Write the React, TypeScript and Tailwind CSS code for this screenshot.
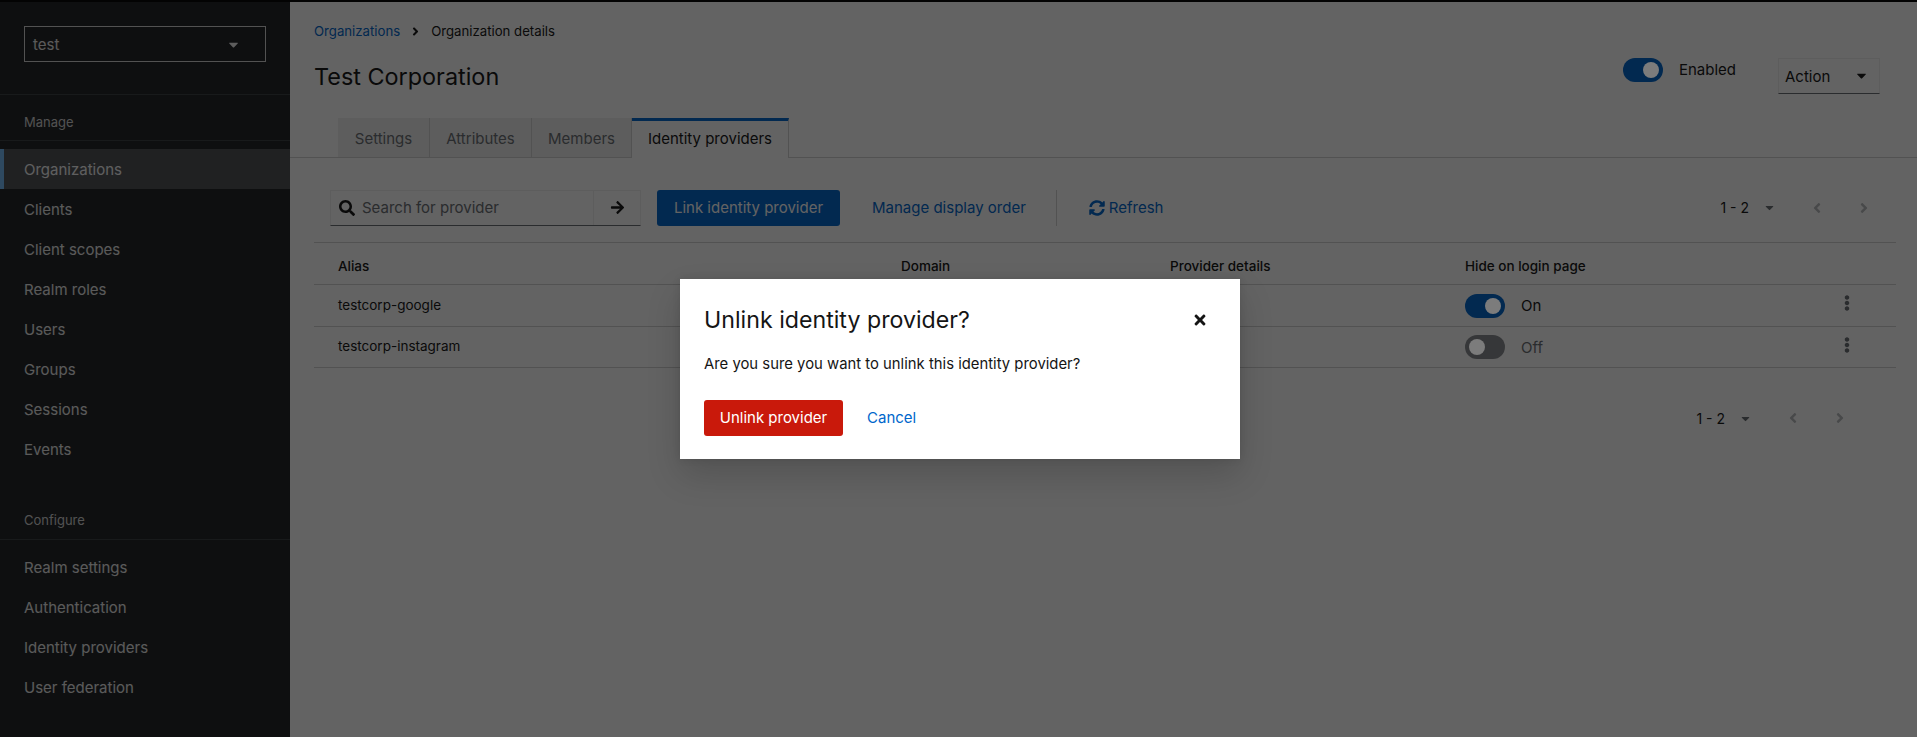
import React from "react";
import {
  FaAngleLeft,
  FaAngleRight,
  FaArrowRight,
  FaCaretDown,
  FaEllipsisV,
  FaSearch,
  FaSyncAlt,
  FaTimes,
} from "react-icons/fa";

const manageItems = ["Organizations", "Clients", "Client scopes", "Realm roles", "Users", "Groups", "Sessions", "Events"];
const configureItems = ["Realm settings", "Authentication", "Identity providers", "User federation"];

const NavItem = ({ label, active }: { label: string; active?: boolean }) => (
  <div
    className={
      active
        ? "flex h-10 items-center border-l-4 border-[#73bcf7] bg-[#4f5255] pt-[2px] pl-5 text-[#f5f5f5]"
        : "flex h-10 items-center pt-[2px] pl-6 text-[#e8e8e8]"
    }
  >
    {label}
  </div>
);

const Sidebar = () => (
  <aside className="flex w-[290px] shrink-0 flex-col bg-[#212427] text-[15px]">
    <div className="border-b border-[#3c3f42] px-6 pt-6 pb-8">
      <div className="flex h-9 items-center justify-between border border-[#d2d2d2] pr-6 pl-2 text-[#e8e8e8]">
        <span className="pt-[2px]">test</span>
        <FaCaretDown className="text-[15px] text-[#f0f0f0]" />
      </div>
    </div>
    <div className="flex h-[46px] items-center border-b border-[#3c3f42] pt-[10px] pl-6 text-[13px] text-[#d2d2d2]">Manage</div>
    <nav className="mt-2">
      {manageItems.map((item) => (
        <NavItem key={item} label={item} active={item === "Organizations"} />
      ))}
    </nav>
    <div className="mt-[31px] flex h-[40px] items-center border-b border-[#3c3f42] pt-[2px] pl-6 text-[13px] text-[#d2d2d2]">Configure</div>
    <nav className="mt-[7px]">
      {configureItems.map((item) => (
        <NavItem key={item} label={item} />
      ))}
    </nav>
  </aside>
);

const Pagination = () => (
  <div className="flex items-center text-[14px] text-[#151515]">
    <span>1 - 2</span>
    <FaCaretDown className="ml-[14px] text-[13px] text-[#6a6e73]" />
    <FaAngleLeft className="ml-[33px] text-[16px] text-[#b8bbbe]" />
    <FaAngleRight className="ml-[31px] text-[16px] text-[#b8bbbe]" />
  </div>
);

const Toggle = ({ on }: { on: boolean }) => (
  <div className={on ? "flex h-6 w-10 items-center justify-end rounded-full bg-[#06c] pr-1" : "flex h-6 w-10 items-center rounded-full bg-[#8a8d90] pl-1"}>
    <div className="relative z-20 h-4 w-4 rounded-full bg-[#7c7c7c]" />
  </div>
);

const tabs = [
  { label: "Settings", width: "w-[92px]" },
  { label: "Attributes", width: "w-[102px]" },
  { label: "Members", width: "w-[100px]" },
];

const Row = ({ alias, on }: { alias: string; on: boolean }) => (
  <div className={on ? "grid h-[42px] grid-cols-[587px_269px_295px_1fr] border-b border-[#d2d2d2] text-[13.5px]" : "grid h-[41px] grid-cols-[587px_269px_295px_1fr] border-b border-[#d2d2d2] text-[13.5px]"}>
    <div className={on ? "pt-[10px] pl-6 text-[#151515]" : "pt-[9px] pl-6 text-[#151515]"}>{alias}</div>
    <div />
    <div />
    <div className="flex justify-between pr-[41px]">
      <div className="flex items-center pt-[1px]">
        <Toggle on={on} />
        <span className={on ? "ml-4 pt-[1px] text-[15px] text-[#151515]" : "ml-4 pt-[1px] text-[15px] text-[#6a6e73]"}>{on ? "On" : "Off"}</span>
      </div>
      <FaEllipsisV className="mt-[10px] text-[16px] text-[#6a6e73]" />
    </div>
  </div>
);

const Main = () => (
  <main className="flex min-w-0 flex-1 flex-col bg-white text-[#151515]">
    <div className="flex items-center px-6 pt-[20px] text-[13.2px]">
      <span className="text-[#06c]">Organizations</span>
      <FaAngleRight className="mx-[9px] text-[13px]" />
      <span>Organization details</span>
    </div>
    <div className="flex justify-between pt-[16px] pr-[37px] pl-6">
      <h1 className="pt-[1px] text-[23.4px] leading-9">Test Corporation</h1>
      <div className="flex items-start">
        <div className="flex h-6 items-center">
          <Toggle on />
          <span className="ml-4 text-[15px]">Enabled</span>
        </div>
        <div className="ml-[42px] flex h-9 w-[102px] items-center justify-between border border-[#f0f0f0] border-b-[#6a6e73] pr-[10px] pl-[6px] text-[15px]">
          <span className="pt-[2px]">Action</span>
          <FaCaretDown className="text-[15px]" />
        </div>
      </div>
    </div>
    <div className="mt-[23px] flex h-10 border-b border-[#d2d2d2] pl-12 text-[15px]">
      {tabs.map((tab) => (
        <div key={tab.label} className={`flex items-center justify-center border-r border-[#d2d2d2] bg-[#f0f0f0] pt-[3px] text-[#6a6e73] ${tab.width}`}>
          {tab.label}
        </div>
      ))}
      <div className="-mb-px flex w-[157px] items-center justify-center border-r border-t-[3px] border-[#d2d2d2] border-t-[#06c] bg-white">Identity providers</div>
    </div>
    <div className="flex items-center justify-between pt-8 pr-[45px] pb-4 pl-10">
      <div className="flex items-center text-[15px]">
        <div className="flex h-9 w-[311px] items-center border border-[#f0f0f0] border-b-[#6a6e73]">
          <div className="flex flex-1 items-center pl-2">
            <FaSearch className="text-[16px]" />
            <span className="ml-[7px] pt-[1px] text-[#6a6e73]">Search for provider</span>
          </div>
          <div className="flex h-full w-[47px] items-center justify-center border-l border-[#f0f0f0]">
            <FaArrowRight className="text-[15px]" />
          </div>
        </div>
        <div className="ml-4 flex h-9 w-[183px] items-center justify-center rounded-[3px] bg-[#06c] pt-[1px] text-white">Link identity provider</div>
        <span className="ml-8 pt-[1px] text-[#06c]">Manage display order</span>
        <div className="ml-[30px] h-9 w-px bg-[#d2d2d2]" />
        <div className="ml-8 flex items-center pt-[1px] text-[#06c]">
          <FaSyncAlt className="mr-[4px] text-[16px]" />
          Refresh
        </div>
      </div>
      <Pagination />
    </div>
    <div className="mr-[21px] ml-6 border-t border-[#d2d2d2]">
      <div className="grid h-[42px] grid-cols-[587px_269px_295px_1fr] items-center border-b border-[#d2d2d2] pt-[6px] text-[13.5px] font-medium">
        <div className="pl-6">Alias</div>
        <div>Domain</div>
        <div>Provider details</div>
        <div>Hide on login page</div>
      </div>
      <Row alias="testcorp-google" on />
      <Row alias="testcorp-instagram" on={false} />
    </div>
    <div className="flex justify-end pt-[40px] pr-[69px]">
      <Pagination />
    </div>
  </main>
);

const UnlinkDialog = () => (
  <div className="absolute inset-0 z-10 flex items-start justify-center bg-[#030303]/[.62] pt-[279px] pl-[3px]">
    <div className="flex h-[180px] w-[560px] flex-col bg-white px-6 pt-6 text-[#151515] shadow-[0_16px_32px_rgba(3,3,3,0.16),0_0_8px_rgba(3,3,3,0.1)]">
      <div className="flex items-center justify-between">
        <h2 className="text-[23.2px] leading-[34px]">Unlink identity provider?</h2>
        <FaTimes className="mr-[8px] text-[16px]" />
      </div>
      <p className="mt-[16px] text-[14.85px]">Are you sure you want to unlink this identity provider?</p>
      <div className="mt-[25px] flex items-center text-[15px]">
        <div className="flex h-9 w-[139px] items-center justify-center rounded-[3px] bg-[#c9190b] text-white">Unlink provider</div>
        <span className="ml-6 text-[#06c]">Cancel</span>
      </div>
    </div>
  </div>
);

export default function App() {
  return (
    <div className="relative h-screen overflow-hidden" style={{ fontFamily: "Inter, 'Noto Sans', sans-serif" }}>
      <div className="h-[2px] bg-[#030303]" />
      <div className="flex h-[735px]">
        <Sidebar />
        <Main />
      </div>
      <UnlinkDialog />
    </div>
  );
}
